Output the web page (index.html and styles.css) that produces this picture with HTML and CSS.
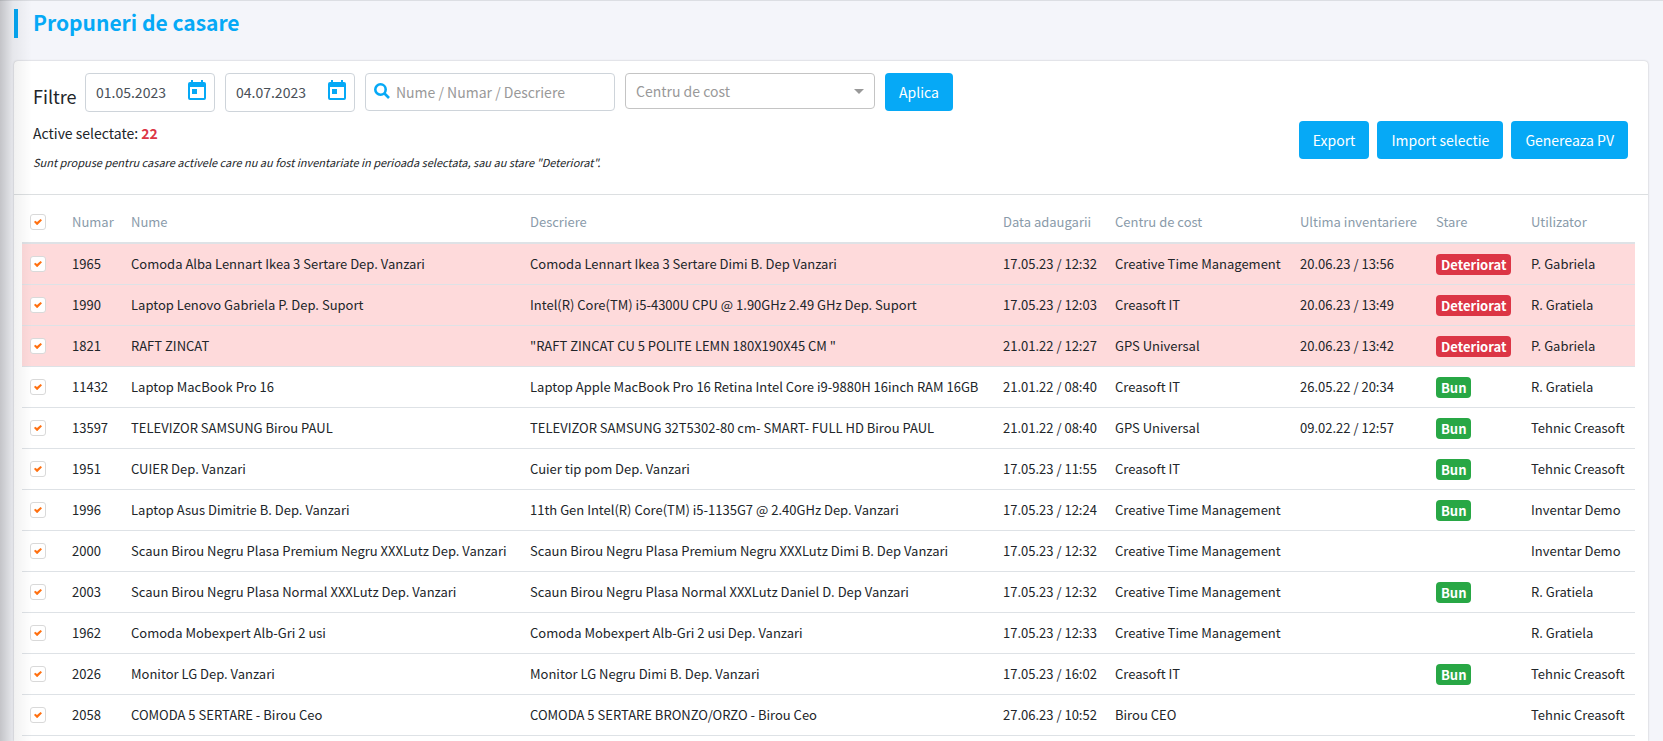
FILE: index.html
```html
<!DOCTYPE html>
<html lang="ro">
	<head>
		<title>Propuneri de casare</title>
		<meta charset="utf-8">
		<link rel="stylesheet" href="styles.css">
	</head>

	<body>
		<h1 class="page_title">Propuneri de casare</h1>

		<div class="card">
			<div class="card_header">
				<form class="filters">
					<span class="filters_title">Filtre</span>
					<div class="field field_date">
						<input type="text" value="01.05.2023" aria-label="De la">
						<svg class="icon_calendar" viewBox="0 0 18 20"><path d="M2 2h1V0h2v2h8V0h2v2h1a2 2 0 0 1 2 2v14a2 2 0 0 1-2 2H2a2 2 0 0 1-2-2V4a2 2 0 0 1 2-2zM2 7v11h14V7zM4 9h5v5H4z"/></svg>
					</div>
					<div class="field field_date">
						<input type="text" value="04.07.2023" aria-label="Pana la">
						<svg class="icon_calendar" viewBox="0 0 18 20"><path d="M2 2h1V0h2v2h8V0h2v2h1a2 2 0 0 1 2 2v14a2 2 0 0 1-2 2H2a2 2 0 0 1-2-2V4a2 2 0 0 1 2-2zM2 7v11h14V7zM4 9h5v5H4z"/></svg>
					</div>
					<div class="field field_search">
						<svg class="icon_search" viewBox="0 0 16 16"><circle cx="6.500" cy="6.500" r="5.200"/><path d="M10.500 10.500L15 15"/></svg>
						<input type="text" placeholder="Nume / Numar / Descriere" aria-label="Cauta">
					</div>
					<div class="field field_select">
						<select aria-label="Centru de cost">
							<option>Centru de cost</option>
						</select>
					</div>
					<button type="button" class="btn">Aplica</button>
				</form>
				<div class="summary">
					<div>
						<p class="selected">Active selectate: <b>22</b></p>
						<p class="hint">Sunt propuse pentru casare activele care nu au fost inventariate in perioada selectata, sau au stare "Deteriorat".</p>
					</div>
					<div class="actions">
						<button type="button" class="btn">Export</button>
						<button type="button" class="btn">Import selectie</button>
						<button type="button" class="btn">Genereaza PV</button>
					</div>
				</div>
			</div>

			<table class="assets">
				<colgroup>
					<col class="col_check">
					<col class="col_number">
					<col class="col_name">
					<col class="col_description">
					<col class="col_added">
					<col class="col_center">
					<col class="col_inventory">
					<col class="col_state">
					<col class="col_user">
				</colgroup>
				<thead>
					<tr><th><input type="checkbox" aria-label="Toate" checked></th><th>Numar</th><th>Nume</th><th>Descriere</th><th>Data adaugarii</th><th>Centru de cost</th><th>Ultima inventariere</th><th>Stare</th><th>Utilizator</th></tr>
				</thead>
				<tbody>
					<tr class="damaged"><td><input type="checkbox" aria-label="1965" checked></td><td>1965</td><td>Comoda Alba Lennart Ikea 3 Sertare Dep. Vanzari</td><td>Comoda Lennart Ikea 3 Sertare Dimi B. Dep Vanzari</td><td>17.05.23 / 12:32</td><td>Creative Time Management</td><td>20.06.23 / 13:56</td><td><span class="badge badge_bad">Deteriorat</span></td><td>P. Gabriela</td></tr>
					<tr class="damaged"><td><input type="checkbox" aria-label="1990" checked></td><td>1990</td><td>Laptop Lenovo Gabriela P. Dep. Suport</td><td>Intel(R) Core(TM) i5-4300U CPU @ 1.90GHz 2.49 GHz Dep. Suport</td><td>17.05.23 / 12:03</td><td>Creasoft IT</td><td>20.06.23 / 13:49</td><td><span class="badge badge_bad">Deteriorat</span></td><td>R. Gratiela</td></tr>
					<tr class="damaged"><td><input type="checkbox" aria-label="1821" checked></td><td>1821</td><td>RAFT ZINCAT</td><td>"RAFT ZINCAT CU 5 POLITE LEMN 180X190X45 CM "</td><td>21.01.22 / 12:27</td><td>GPS Universal</td><td>20.06.23 / 13:42</td><td><span class="badge badge_bad">Deteriorat</span></td><td>P. Gabriela</td></tr>
					<tr><td><input type="checkbox" aria-label="11432" checked></td><td>11432</td><td>Laptop MacBook Pro 16</td><td>Laptop Apple MacBook Pro 16 Retina Intel Core i9-9880H 16inch RAM 16GB</td><td>21.01.22 / 08:40</td><td>Creasoft IT</td><td>26.05.22 / 20:34</td><td><span class="badge badge_good">Bun</span></td><td>R. Gratiela</td></tr>
					<tr><td><input type="checkbox" aria-label="13597" checked></td><td>13597</td><td>TELEVIZOR SAMSUNG Birou PAUL</td><td>TELEVIZOR SAMSUNG 32T5302-80 cm- SMART- FULL HD Birou PAUL</td><td>21.01.22 / 08:40</td><td>GPS Universal</td><td>09.02.22 / 12:57</td><td><span class="badge badge_good">Bun</span></td><td>Tehnic Creasoft</td></tr>
					<tr><td><input type="checkbox" aria-label="1951" checked></td><td>1951</td><td>CUIER Dep. Vanzari</td><td>Cuier tip pom Dep. Vanzari</td><td>17.05.23 / 11:55</td><td>Creasoft IT</td><td></td><td><span class="badge badge_good">Bun</span></td><td>Tehnic Creasoft</td></tr>
					<tr><td><input type="checkbox" aria-label="1996" checked></td><td>1996</td><td>Laptop Asus Dimitrie B. Dep. Vanzari</td><td>11th Gen Intel(R) Core(TM) i5-1135G7 @ 2.40GHz Dep. Vanzari</td><td>17.05.23 / 12:24</td><td>Creative Time Management</td><td></td><td><span class="badge badge_good">Bun</span></td><td>Inventar Demo</td></tr>
					<tr><td><input type="checkbox" aria-label="2000" checked></td><td>2000</td><td>Scaun Birou Negru Plasa Premium Negru XXXLutz Dep. Vanzari</td><td>Scaun Birou Negru Plasa Premium Negru XXXLutz Dimi B. Dep Vanzari</td><td>17.05.23 / 12:32</td><td>Creative Time Management</td><td></td><td></td><td>Inventar Demo</td></tr>
					<tr><td><input type="checkbox" aria-label="2003" checked></td><td>2003</td><td>Scaun Birou Negru Plasa Normal XXXLutz Dep. Vanzari</td><td>Scaun Birou Negru Plasa Normal XXXLutz Daniel D. Dep Vanzari</td><td>17.05.23 / 12:32</td><td>Creative Time Management</td><td></td><td><span class="badge badge_good">Bun</span></td><td>R. Gratiela</td></tr>
					<tr><td><input type="checkbox" aria-label="1962" checked></td><td>1962</td><td>Comoda Mobexpert Alb-Gri 2 usi</td><td>Comoda Mobexpert Alb-Gri 2 usi Dep. Vanzari</td><td>17.05.23 / 12:33</td><td>Creative Time Management</td><td></td><td></td><td>R. Gratiela</td></tr>
					<tr><td><input type="checkbox" aria-label="2026" checked></td><td>2026</td><td>Monitor LG Dep. Vanzari</td><td>Monitor LG Negru Dimi B. Dep. Vanzari</td><td>17.05.23 / 16:02</td><td>Creasoft IT</td><td></td><td><span class="badge badge_good">Bun</span></td><td>Tehnic Creasoft</td></tr>
					<tr><td><input type="checkbox" aria-label="2058" checked></td><td>2058</td><td>COMODA 5 SERTARE - Birou Ceo</td><td>COMODA 5 SERTARE BRONZO/ORZO - Birou Ceo</td><td>27.06.23 / 10:52</td><td>Birou CEO</td><td></td><td></td><td>Tehnic Creasoft</td></tr>
				</tbody>
			</table>
		</div>
	</body>
</html>
```
FILE: styles.css
```css
* {
	box-sizing: border-box;
}

body {
	display: flex;
	flex-direction: column;
	height: 100vh;
	margin: 0;
	padding: 8px 15px 0 14px;
	overflow: hidden;
	border-top: 1px solid #dcdee3;
	background-color: #f4f5fa;
	color: #212529;
	font-family: "Noto Sans CJK SC", "Noto Sans", sans-serif;
	font-size: 14px;
	line-height: 20px;
}

/* Shadow of the side menu, falls over the page */
body::before {
	content: "";
	position: absolute;
	top: 0;
	left: 0;
	width: 32px;
	height: 100%;
	background: linear-gradient(to right, rgba(0,0,0,0.2), rgba(0,0,0,0.06) 40%, rgba(0,0,0,0));
	pointer-events: none;
}

input, select, button {
	font: inherit;
	color: inherit;
}

.page_title {
	margin: 0 0 23px 0;
	padding: 0 0 2px 15px;
	border-left: 4px solid #06a9f6;
	color: #06a9f6;
	font-size: 21px;
	line-height: 27px;
}

.card {
	flex: 1 0 auto;
	border-radius: 4px 4px 0 0;
	background-color: #fff;
	box-shadow: 0 0 2px rgba(0,0,0,0.25);
}

.card_header {
	padding: 12px 20px 22px 19px;
	border-bottom: 1px solid #dcdfe1;
}

.filters {
	display: flex;
	align-items: flex-start;
	gap: 10px;
}

.filters_title {
	width: 42px;
	padding-top: 10px;
	font-size: 18px;
	line-height: 26px;
}

.field {
	display: flex;
	align-items: center;
	height: 38px;
	border: 1px solid #ced4da;
	border-radius: 4px;
	background-color: #fff;
	color: #495057;
}

.field input {
	width: 0;
	flex: 1;
	padding: 0;
	border: none;
	outline: none;
	background: none;
}

.field input::placeholder {
	color: #999;
	opacity: 1;
}

.field_date {
	width: 130px;
	height: 39px;
	padding: 0 8px 2px 10px;
}

.icon_calendar {
	width: 18px;
	height: 20px;
	margin-bottom: 3px;
	fill: #06a9f6;
}

.field_search {
	width: 250px;
	padding: 0 8px;
	gap: 6px;
}

.icon_search {
	width: 16px;
	height: 16px;
	margin-bottom: 2px;
	fill: none;
	stroke: #06a9f6;
	stroke-width: 2.6;
}

.field_select {
	width: 250px;
	height: 36px;
	padding-right: 10px;
	border-color: #c4c4c4;
	color: #999;
}

.field_select select {
	flex: 1;
	padding: 0 10px;
	border: none;
	outline: none;
	background: none;
	appearance: none;
}

.field_select::after {
	content: "";
	border: 5px solid transparent;
	border-top-color: #999;
	border-bottom: none;
}

.btn {
	height: 38px;
	padding: 0 14px;
	border: none;
	border-radius: 4px;
	background-color: #06a9f6;
	color: #fff;
}

.summary {
	display: flex;
	justify-content: space-between;
	align-items: flex-start;
	margin-top: 9px;
}

.summary p {
	margin: 0;
}

.selected {
	padding-top: 2px;
}

.selected b {
	color: #dc3545;
}

.summary .hint {
	margin-top: 9px;
	font-size: 11px;
	font-style: italic;
}

.actions {
	display: flex;
	gap: 8px;
}

.assets {
	width: calc(100% - 21px);
	margin: 7px 13px 0 8px;
	border-collapse: separate;
	border-spacing: 0;
	table-layout: fixed;
	font-size: 13px;
}

.assets th, .assets td {
	height: 41px;
	padding: 0 8px;
	border-bottom: 1px solid #dee2e6;
	text-align: left;
	white-space: nowrap;
}

.assets th {
	height: 42px;
	border-bottom-width: 2px;
	color: #8a9baa;
	font-weight: normal;
}

.damaged {
	background-color: #fedadb;
}

/* The description column takes what is left */
.col_check { width: 42px; }
.col_number { width: 59px; }
.col_name { width: 399px; }
.col_added { width: 112px; }
.col_center { width: 185px; }
.col_inventory { width: 136px; }
.col_state { width: 95px; }
.col_user { width: 112px; }

input[type="checkbox"] {
	display: block;
	width: 16px;
	height: 16px;
	margin: 0;
	border: 1px solid #d9d9d9;
	border-radius: 3px;
	background-color: #fff;
	appearance: none;
}

input[type="checkbox"]:checked::before {
	content: "";
	display: block;
	width: 8px;
	height: 6px;
	margin: 4px 3px;
	background-color: #ff7010;
	clip-path: polygon(0 50%, 15% 30%, 38% 52%, 82% 0, 100% 22%, 42% 100%, 36% 100%);
}

.badge {
	display: inline-block;
	padding: 0 5px;
	border-radius: 4px;
	color: #fff;
	font-weight: bold;
	line-height: 21px;
}

.badge_bad {
	background-color: #dc3545;
}

.badge_good {
	background-color: #28a745;
}
```
